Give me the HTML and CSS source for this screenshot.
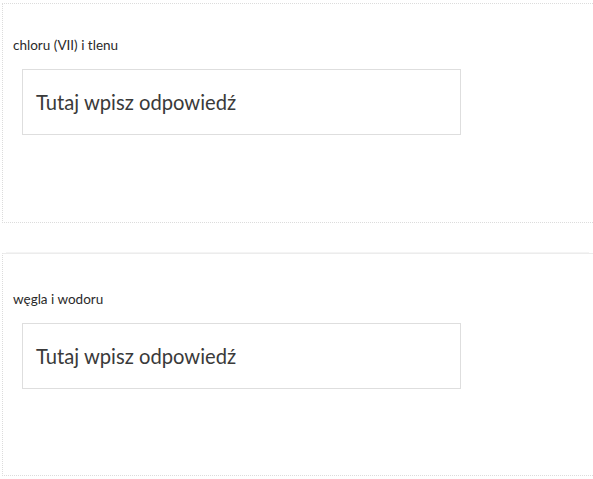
FILE: index.html
```html
<!DOCTYPE html>
<html lang="pl">
<head>
<meta charset="utf-8">
<link rel="stylesheet" href="styles.css">
</head>
<body>
<div class="page">
  <section class="card card-first">
    <div class="label">chloru (VII) i tlenu</div>
    <div class="answer">Tutaj wpisz odpowiedź</div>
  </section>
  <section class="card card-second">
    <div class="label">węgla i wodoru</div>
    <div class="answer">Tutaj wpisz odpowiedź</div>
  </section>
</div>
</body>
</html>
```
FILE: styles.css
```css
html, body {
  margin: 0;
  padding: 0;
  background: #ffffff;
}
.page {
  padding: 3px 0 0 2px;
  font-family: "Lato", "Open Sans", sans-serif;
}
.card {
  border: 1px dotted #dcdcdc;
  border-right: none;
  padding: 33px 0 87px 10px;
}
.card-second {
  margin-top: 30px;
  border-top: 1px solid #ececec;
  padding-top: 37px;
  padding-bottom: 86px;
  box-shadow: 0 -5px 0 -4px #f4f4f4;
}
.label {
  font-size: 13.5px;
  line-height: 16px;
  color: #2a2a2a;
}
.answer {
  margin: 16px 0 0 9px;
  width: 424px;
  height: 64px;
  line-height: 64px;
  border: 1px solid #dedede;
  padding: 0 0 0 13px;
  font-size: 20.2px;
  color: #3a3a3a;
}
```
